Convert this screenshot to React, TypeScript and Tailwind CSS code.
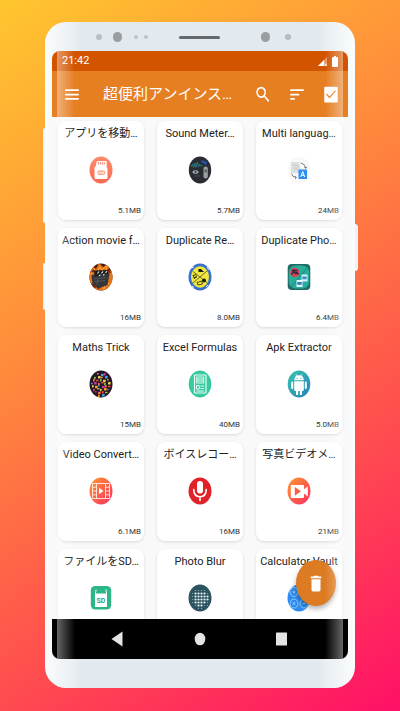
import { useState } from 'react';
import type { ReactNode } from 'react';

// rows that run under the navigation bar have no size line yet
const APPS = [
  { name: 'アプリを移動…', size: '5.1MB', icon: 'sdMove' },
  { name: 'Sound Meter…', size: '5.7MB', icon: 'sound' },
  { name: 'Multi languag…', size: '24MB', icon: 'translate' },
  { name: 'Action movie f…', size: '16MB', icon: 'action' },
  { name: 'Duplicate Re…', size: '8.0MB', icon: 'dupRemover' },
  { name: 'Duplicate Pho…', size: '6.4MB', icon: 'dupPhoto' },
  { name: 'Maths Trick', size: '15MB', icon: 'maths' },
  { name: 'Excel Formulas', size: '40MB', icon: 'excel' },
  { name: 'Apk Extractor', size: '5.0MB', icon: 'apk' },
  { name: 'Video Convert…', size: '6.1MB', icon: 'film' },
  { name: 'ボイスレコー…', size: '16MB', icon: 'mic' },
  { name: '写真ビデオメ…', size: '21MB', icon: 'camera' },
  { name: 'ファイルをSD…', icon: 'sdFile' },
  { name: 'Photo Blur', icon: 'blur' },
  { name: 'Calculator Vault', icon: 'vault' },
];

const MATHS_COLORS = ['#f5a623', '#e8503a', '#3fa9d8', '#8bc34a', '#c0399b', '#f0d043', '#ff7043'];
const MATHS_ROWS = [
  { y: 3, xs: [8, 12, 15] },
  { y: 6, xs: [5, 9, 12, 16] },
  { y: 9, xs: [4, 7, 11, 14, 18] },
  { y: 12, xs: [2, 5, 9, 12, 15, 19] },
  { y: 15, xs: [3, 6, 9, 13, 16, 19] },
  { y: 18, xs: [4, 8, 11, 15, 18] },
  { y: 21, xs: [6, 9, 13, 16] },
  { y: 24, xs: [9, 13] },
];

const ICONS: Record<string, ReactNode> = {
  sdMove: (
    <>
      <ellipse cx="12" cy="14" rx="11.5" ry="13.5" fill="url(#coral)" />
      <path d="M8.5 5h8.2q1 0 1 1v5.2l.8 1.2v9.1q0 1.5-1.4 1.5H6.9q-1.4 0-1.4-1.5v-10l1.6-2V6.8z" fill="#fff" />
      <path d="M9.3 6v2.6M11.3 6v2.6M13.3 6v2.6M15.3 6v2.6" stroke="#fb7a5d" strokeWidth=".9" />
      <rect x="9" y="15" width="6.4" height="3.4" rx=".6" fill="none" stroke="#fb8468" strokeWidth=".9" />
      <path d="M11 15v3.4M13.2 15v3.4" stroke="#fb8468" strokeWidth=".7" />
    </>
  ),
  sound: (
    <>
      <ellipse cx="12" cy="14" rx="11.2" ry="13.5" fill="#292d33" />
      <path d="M2.5 10h1.3l.8-2 .9 3.5L6.8 7l1.2 4.5L9.3 6l1.4 5 1.1-3 1 2h2" fill="none" stroke="#2f8795" strokeWidth=".8" />
      <path d="M13 4.5q4-1 6.5 2.5l-2.5 2.5q-1-3-4-3z" fill="#234fa0" />
      <ellipse cx="7.5" cy="16" rx="3" ry="1.8" fill="#a9aeb5" />
      <circle cx="7.5" cy="16" r="1.1" fill="#343a42" />
      <rect x="15.5" y="10.5" width="4.3" height="12" rx="2" fill="#9b9f9d" />
      <rect x="16.5" y="13.5" width="2.3" height="3" fill="#5a5f60" />
      <path d="M6 20h6" stroke="#454b54" />
    </>
  ),
  translate: (
    <>
      <ellipse cx="12" cy="14" rx="11.3" ry="13.3" fill="#f8f8f8" />
      <path d="M5 6h7l2.5 11H5q-1 0-1-1V7q0-1 1-1z" fill="#dadedf" />
      <path d="M6.5 9.5h5M9 8.2v1.3M7 14q3.5-1 4-4.5M7.5 11q1 2.3 4 3" stroke="#c9cdcf" strokeWidth=".8" fill="none" />
      <path d="M13.5 7q4.5.5 5.2 5M17.3 11l1.5 1.5 1.2-1.8M4.5 17.5q.7 3.5 4.5 4M8 20l1.5 1.5L8 23" fill="none" stroke="#62676c" strokeWidth=".8" />
      <rect x="11.500" y="13.500" width="8.500" height="9.500" rx=".6" fill="#2c8ef4" />
      <path d="M13.700 21l2-5.500 2 5.500M14.500 19.300h2.500" fill="none" stroke="#fff" strokeWidth="1" />
    </>
  ),
  action: (
    <g clipPath="url(#disc)">
      <rect width="24" height="28" fill="#4a1c08" />
      <path d="M0 9l4-6 3 3 3-6 4 4 5-3 1 6 4 2v8l-2 7-5 4H7l-4-5-3-5z" fill="#e8741a" />
      <path d="M2 12l3-6 3 3 3-5 2 3 4-4 1 5 3 1M3 18l2 3 1-3 3 7 2-4 4 5 2-7 3 2" fill="none" stroke="#ffb040" strokeWidth=".9" />
      <path d="M2 21l3 3 3-1 2 3M3 9l2-2M19 6l2 4" fill="none" stroke="#8a2408" strokeWidth="2" />
      <path d="M2.500 12l16-2.500 2 1.500-2 11-9 3.500-6-4z" fill="#33363a" />
      <path d="M5 7.500l14-.5.5 4-14 2z" fill="#1d1e20" />
      <path d="M8.500 10.500l1.500-2M12.500 10.300l1.500-2M16.500 10l1.500-2M10 12.800l1.500-1M14 12.300l1.500-1" stroke="#e0e0e0" strokeWidth="1.100" />
      <path d="M5 16l12-1.500M5 18.500l11-1M9 15.500l-1 6" stroke="#5f6264" strokeWidth=".7" />
    </g>
  ),
  dupRemover: (
    <>
      <ellipse cx="12" cy="14" rx="11.500" ry="13.500" fill="#3970cd" />
      <ellipse cx="12" cy="14" rx="9" ry="10.700" fill="#f2e83c" />
      <path d="M5 20L19 8M5 8.500l14 11" stroke="#3a3b22" strokeWidth=".7" />
      <path d="M10.500 6h2.500l3 3h-5.500z" fill="#171812" />
      <path d="M4.500 12.500l3-1.500 1.700 3-3 2z" fill="#25261b" />
      <path d="M5.500 13l2-1 .7 1.200-2 1z" fill="#f2e83c" />
      <circle cx="16" cy="17.500" r="2" fill="#1a1b14" />
      <path d="M9 19.500l4.500-1.500 1 3-4.500 1z" fill="none" stroke="#222318" strokeWidth=".8" />
      <path d="M3 5l3-1M19 4l2 3M4 23l2 1.500M20 22l-2 2" stroke="#e9eefb" strokeWidth="1" />
    </>
  ),
  dupPhoto: (
    <>
      <rect x=".7" y="1" width="22.600" height="26" rx="4" fill="#216d65" />
      <rect x="1.800" y="2.500" width="20.400" height="23" rx="7" fill="#27ad9b" />
      <path d="M4 24L20 5" stroke="#197d72" strokeWidth=".8" />
      <circle cx="7.800" cy="9.500" r="4.700" fill="#d6414c" />
      <path d="M4.500 11.500l2.300-3 2 2 1-1 1.700 2M5 7.500h5.500" fill="none" stroke="#30244a" strokeWidth="1.300" />
      <path d="M14.500 11.500h6v7h-6z" fill="#d9f1fb" />
      <path d="M15.300 13.500h4.400v2.700h-4.400z" fill="#3d8fc8" />
      <path d="M9.500 17h6v7h-6z" fill="#e3f5fc" />
      <path d="M10.300 19h4.400v2.700h-4.400z" fill="#3376b8" />
    </>
  ),
  maths: (
    <>
      <ellipse cx="12" cy="14" rx="11.500" ry="13.500" fill="#27152b" />
      {MATHS_ROWS.map((row, r) =>
        row.xs.map((x, i) => (
          <rect
            key={`${r}-${i}`}
            x={x}
            y={row.y + ((i + r) % 2) * 0.8}
            width={i % 2 ? 2.6 : 1.6}
            height={(i + r) % 3 ? 2.4 : 1.5}
            rx=".5"
            fill={MATHS_COLORS[(r * 3 + i * 2) % MATHS_COLORS.length]}
          />
        ))
      )}
    </>
  ),
  excel: (
    <>
      <ellipse cx="12" cy="14" rx="11.300" ry="13.500" fill="#38c9a0" />
      <rect x="6.500" y="5" width="11.500" height="18" rx=".8" fill="none" stroke="#eafff7" strokeWidth="1.200" />
      <rect x="8.700" y="7" width="7" height="6" fill="none" stroke="#eafff7" strokeWidth=".9" />
      <path d="M8.700 9h7M8.700 11h7M12.500 16h3.500M12.500 18.500h3.500M8.500 21h7.500M8.500 15.500h2.700v3.500H8.500z" stroke="#eafff7" strokeWidth="1" fill="none" />
    </>
  ),
  apk: (
    <>
      <ellipse cx="12" cy="14" rx="11.300" ry="13.500" fill="url(#aqua)" />
      <path d="M7.200 10.300q.2-5 4.800-5t4.800 5zM7.200 11.300h9.600v8.400q0 1.200-1.200 1.200H15v3q0 1.200-1.100 1.200t-1.100-1.200v-3h-1.600v3q0 1.200-1.100 1.200T9 23.900v-3h-.6q-1.200 0-1.200-1.200z" fill="#fff" />
      <path d="M5.200 12.500v5.500M18.800 12.500v5.500" stroke="#fff" strokeWidth="2" strokeLinecap="round" />
      <path d="M8.700 4l1.300 2M15.300 4L14 6" stroke="#fff" strokeWidth=".7" />
      <circle cx="10" cy="8.300" r=".6" fill="#2fa8b4" />
      <circle cx="14" cy="8.300" r=".6" fill="#2fa8b4" />
    </>
  ),
  film: (
    <>
      <ellipse cx="12" cy="14" rx="11.500" ry="13.500" fill="url(#sunset)" />
      <path d="M3.500 6.500h17v15h-17zM7.500 6.500v15M16.500 6.500v15M3.500 10.200h4M3.500 14h4M3.500 17.800h4M16.500 10.200h4M16.500 14h4M16.500 17.800h4" fill="none" stroke="#fff0e8" strokeWidth=".9" />
      <path d="M10 10.800l4.500 3.200-4.500 3.200z" fill="#fff" />
    </>
  ),
  mic: (
    <>
      <ellipse cx="12" cy="14" rx="11.500" ry="13.500" fill="#df2328" />
      <rect x="9" y="4" width="6" height="12.500" rx="3" fill="#fff" />
      <path d="M5.800 12.500q0 7.300 6.200 7.300t6.200-7.300M12 19.800v3.700" fill="none" stroke="#fff" strokeWidth="1.600" strokeLinecap="round" />
    </>
  ),
  camera: (
    <>
      <ellipse cx="12" cy="14" rx="11.500" ry="13.500" fill="url(#sunset)" />
      <path d="M5 8h11q1 0 1 1v3.200l3.800-3v10.200l-3.800-3V20q0 1-1 1H5q-1.200 0-1.200-1V9q0-1 1.200-1z" fill="#fff" />
      <path d="M7.800 10l6.200 4.300-6.200 4.500z" fill="#fc5c42" />
    </>
  ),
  sdFile: (
    <>
      <rect x="1.800" y="2" width="20.400" height="23.500" rx="4.500" fill="#2cb586" />
      <path d="M7 6.500v3h10v-3l1 2v14.500H6V9z" fill="#fff" />
      <path d="M7 5.500v2M17 5.500v2" stroke="#fff" strokeWidth="1" />
      <text x="12" y="18.500" textAnchor="middle" fill="#1fa376" fontSize="7" fontWeight="700" fontFamily="Roboto, sans-serif">
        SD
      </text>
    </>
  ),
  blur: (
    <>
      <ellipse cx="12" cy="14" rx="11.500" ry="13.500" fill="#2d5561" />
      {[3, 6, 9, 12, 15, 18, 21, 24].map((y) =>
        [4, 7, 10, 13, 16, 19].map((x) => {
          const dist = Math.hypot(x - 12, y - 14);
          if (dist > 10.5) return null;
          const far = dist > 7.5;
          return <circle key={`${x}-${y}`} cx={x + 0.5} cy={y + 0.5} r={far ? 0.6 : 1.1} fill={far ? '#8fb1b8' : '#e4f1f3'} />;
        })
      )}
    </>
  ),
  vault: (
    <>
      <ellipse cx="12" cy="14" rx="11.500" ry="13.500" fill="#2c8af0" />
      <g fill="none" stroke="#a6dcff" strokeWidth=".8">
        <ellipse cx="7" cy="8" rx="4" ry="4.500" />
        <ellipse cx="7" cy="19.500" rx="4" ry="4.500" />
        <ellipse cx="17" cy="19.500" rx="4" ry="4.500" />
        <ellipse cx="17" cy="8" rx="4" ry="4.500" />
        <path d="M5.500 8h3M7 6.500v3M5.700 18l2.600 3M8.300 18l-2.600 3M15.500 19.500h3" />
      </g>
    </>
  ),
};

// shared gradients and the round mask used by the app icons
function IconDefs() {
  return (
    <svg className="absolute h-0 w-0" aria-hidden="true">
      <defs>
        <linearGradient id="coral" x1="0" y1="0" x2="0" y2="1">
          <stop offset="0" stopColor="#ff8a6b" />
          <stop offset="1" stopColor="#f96a50" />
        </linearGradient>
        <linearGradient id="aqua" x1="0" y1="0" x2="1" y2="1">
          <stop offset="0" stopColor="#35c5ae" />
          <stop offset="1" stopColor="#2880b8" />
        </linearGradient>
        <linearGradient id="sunset" x1="0" y1="0" x2="1" y2="1">
          <stop offset="0" stopColor="#ff9a2e" />
          <stop offset="1" stopColor="#fb2c62" />
        </linearGradient>
        <clipPath id="disc">
          <ellipse cx="12" cy="14" rx="11.500" ry="13.500" />
        </clipPath>
      </defs>
    </svg>
  );
}

function Glyph({ d }: { d: string }) {
  return (
    <svg viewBox="0 0 24 24" preserveAspectRatio="none" className="h-[21px] w-[18px]" fill="currentColor" aria-hidden="true">
      <path d={d} />
    </svg>
  );
}

function Sensors() {
  return (
    <div className="grid h-[29px] grid-cols-3 items-center px-[44px]">
      <div className="flex items-center">
        <span className="h-[6px] w-[6px] rounded-full bg-[#b9bfc2]" />
        <span className="ml-[11px] h-[10px] w-[9px] rounded-full bg-[#9a9ea0]" />
        <span className="ml-[12px] h-1 w-1 rounded-full bg-[#bdc4c8]" />
        <span className="ml-[6px] h-1 w-1 rounded-full bg-[#bdc4c8]" />
      </div>
      <span className="mt-[2px] h-[3px] w-[41px] justify-self-center rounded-full bg-[#66696b]" />
      <div className="flex items-center justify-end pr-[13px]">
        <span className="h-[10px] w-[9px] rounded-full bg-[#9a9ea0]" />
        <span className="ml-[15px] h-[6px] w-[6px] rounded-full bg-[#b5bbbe]" />
      </div>
    </div>
  );
}

function StatusBar() {
  return (
    <div className="flex h-5 shrink-0 items-center justify-between bg-[#d35400] px-[10px] text-white">
      <span className="text-[11px] leading-5">21:42</span>
      <div className="flex items-center gap-[5px]">
        <svg viewBox="0 0 9 9" className="h-[9px] w-[9px]" aria-hidden="true">
          <path d="M0 9L9 0v9z" fill="#fff" opacity=".4" />
          <path d="M0 9l6-6v6z" fill="#fff" />
          <path d="M6.500 6.500L9 9M9 6.500L6.500 9" stroke="#fff" strokeWidth=".9" />
        </svg>
        <svg viewBox="0 0 6 11" className="h-[11px] w-[6px]" fill="#fff" aria-hidden="true">
          <path d="M2 0h2v1h1q1 0 1 1v8q0 1-1 1H1q-1 0-1-1V2q0-1 1-1h1z" />
        </svg>
      </div>
    </div>
  );
}

function Toolbar() {
  const [allSelected, setAllSelected] = useState(true);

  return (
    <header className="flex h-[46px] shrink-0 items-center bg-[#e67e22] pl-[11px] pr-2 text-white">
      <button aria-label="Menu">
        <Glyph d="M3 18h18v-2H3v2zm0-5h18v-2H3v2zm0-7v2h18V6H3z" />
      </button>
      <h1 className="ml-[22px] flex-1 whitespace-nowrap text-[15px] leading-5">超便利アンインス…</h1>
      <div className="flex items-center gap-4">
        <button aria-label="Search">
          <Glyph d="M15.500 14h-.79l-.28-.27A6.471 6.471 0 0 0 16 9.500 6.500 6.500 0 1 0 9.500 16c1.610 0 3.090-.59 4.230-1.570l.27.28v.79l5 4.990L20.490 19l-4.990-5zm-6 0C7.010 14 5 11.990 5 9.500S7.010 5 9.500 5 14 7.010 14 9.500 11.990 14 9.500 14z" />
        </button>
        <button aria-label="Sort">
          <Glyph d="M3 18h6v-2H3v2zM3 6v2h18V6H3zm0 7h12v-2H3v2z" />
        </button>
        <label className="relative block">
          <input
            type="checkbox"
            aria-label="Select all"
            checked={allSelected}
            onChange={(e) => setAllSelected(e.target.checked)}
            className="absolute inset-0 appearance-none"
          />
          <Glyph
            d={
              allSelected
                ? 'M20 3H4c-.6 0-1 .4-1 1v16c0 .6.4 1 1 1h16c.6 0 1-.4 1-1V4c0-.6-.4-1-1-1zM10 16.500l-4.500-4.500 1-1.100L10 14.300l7.500-7.200 1 1.100z'
                : 'M19 5v14H5V5h14m0-2H5c-1.100 0-2 .9-2 2v14c0 1.100.9 2 2 2h14c1.100 0 2-.9 2-2V5c0-1.100-.9-2-2-2z'
            }
          />
        </label>
      </div>
    </header>
  );
}

export default function App() {
  return (
    <div
      lang="ja"
      className="flex h-screen flex-col bg-[linear-gradient(145deg,#ffc62e_0%,#ff8a3c_38%,#ff4a50_72%,#ff1067_100%)] px-[45px] pb-[23px] pt-[22px] font-['Roboto','Noto_Sans_CJK_JP',sans-serif]"
    >
      <IconDefs />
      <div className="relative flex min-h-0 flex-1 flex-col rounded-[21px] bg-[linear-gradient(90deg,#fafcfd_0%,#f7fafb_2%,#e3eaef_12%,#e3eaef_88%,#f7fafb_98%,#fafcfd_100%)] px-[7px] pb-[29px]">
        {/* side keys */}
        <span className="absolute -left-[2px] top-[106px] h-[95px] w-[2px] rounded-l bg-[#eef3f5]" />
        <span className="absolute -left-[2px] top-[241px] h-[47px] w-[2px] rounded-l bg-[#eef3f5]" />
        <span className="absolute -right-[3px] top-[202px] h-[47px] w-[3px] rounded-r bg-[#eef3f5]" />

        <Sensors />

        <div className="relative flex min-h-0 flex-1 flex-col overflow-hidden rounded-lg bg-[#f9f9fa]">
          <StatusBar />
          <Toolbar />

          <main className="relative min-h-0 flex-1 overflow-hidden">
            <ul className="grid grid-cols-3 gap-x-[13px] gap-y-2 px-[6px] pt-1">
              {APPS.map((app) => (
                <li
                  key={app.name}
                  className="flex min-h-[99px] flex-col items-center rounded-lg bg-white pb-[3px] pt-[3px] shadow-[0_1px_3px_rgba(0,0,0,0.13)]"
                >
                  <h2 className="whitespace-nowrap text-[11px] leading-5 text-[#222]">{app.name}</h2>
                  <svg viewBox="0 0 24 28" className="mt-3 h-7 w-6" aria-hidden="true">
                    {ICONS[app.icon]}
                  </svg>
                  {app.size && (
                    <p className="mt-[21px] self-end pr-[3px] text-[8px] leading-3 text-[#333]">{app.size}</p>
                  )}
                </li>
              ))}
            </ul>
            <button
              aria-label="Uninstall"
              className="absolute bottom-[13px] right-3 flex h-[46px] w-10 items-center justify-center rounded-[50%] bg-[#dd7b22] text-white shadow-[0_3px_5px_rgba(0,0,0,0.3)]"
            >
              <Glyph d="M6 19c0 1.100.9 2 2 2h8c1.100 0 2-.9 2-2V7H6v12zM19 4h-3.500l-1-1h-5l-1 1H5v2h14V4z" />
            </button>
          </main>

          <nav className="flex h-10 shrink-0 items-center justify-between bg-black px-[55px] text-[#e4e4e4]">
            <button aria-label="Back">
              <svg viewBox="0 0 20 20" className="h-5 w-5" fill="currentColor">
                <path d="M15.500 2.500v15L4.500 10z" />
              </svg>
            </button>
            <button aria-label="Home">
              <svg viewBox="0 0 20 20" className="h-5 w-5" fill="currentColor">
                <ellipse cx="10" cy="10" rx="5.300" ry="6.300" />
              </svg>
            </button>
            <button aria-label="Recents">
              <svg viewBox="0 0 20 20" className="h-5 w-5" fill="currentColor">
                <rect x="3" y="3.500" width="11" height="13" rx=".6" />
              </svg>
            </button>
          </nav>

          {/* glass reflections on the curved edges */}
          <span className="pointer-events-none absolute inset-y-0 left-[5px] w-[18px] bg-linear-to-r from-white/40 to-white/0" />
          <span className="pointer-events-none absolute inset-y-0 right-[5px] w-[18px] bg-linear-to-l from-white/40 to-white/0" />
        </div>
      </div>
    </div>
  );
}
